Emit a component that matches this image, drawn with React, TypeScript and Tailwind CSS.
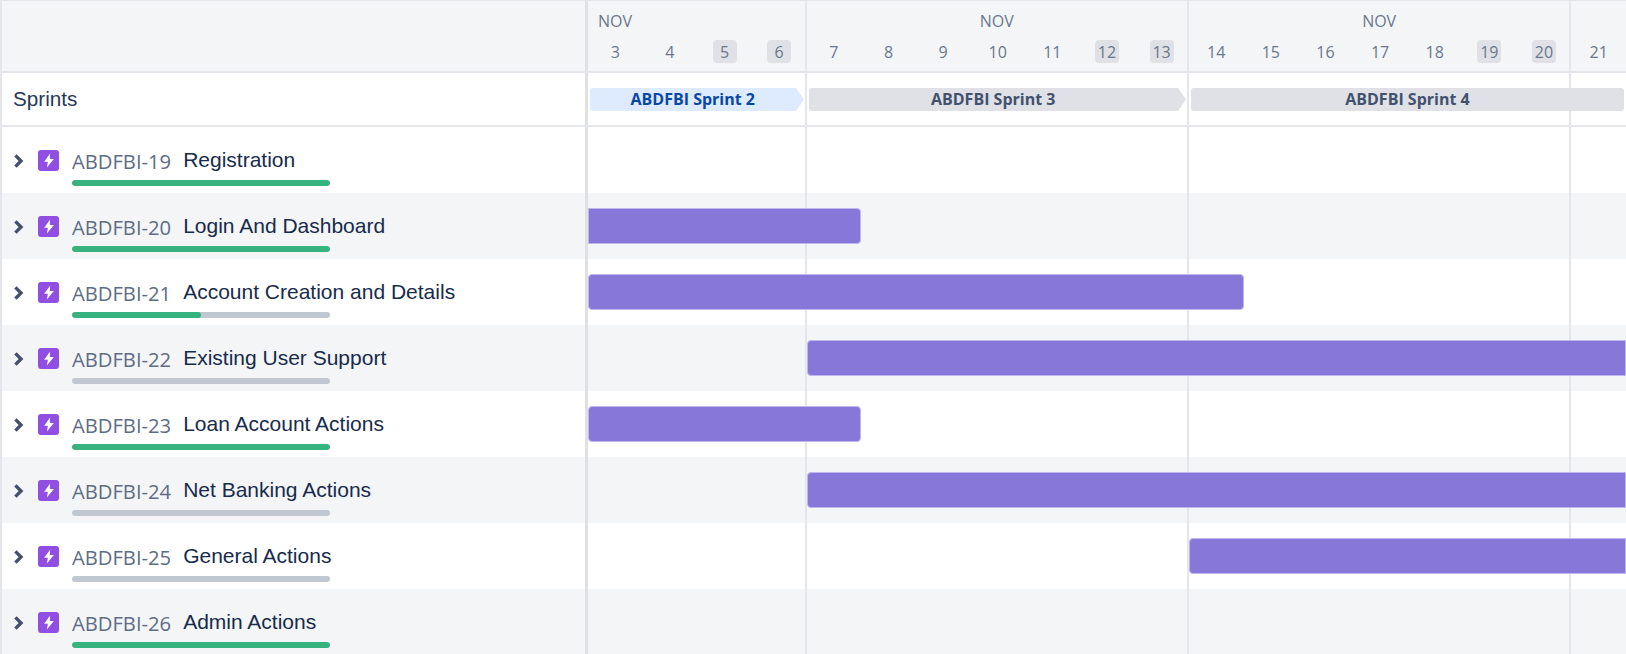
import React from "react";

interface Epic {
  id: string;
  title: string;
  progress: number;
  barClass: string;
}

const epics: Epic[] = [
  { id: "ABDFBI-19", title: "Registration", progress: 100, barClass: "" },
  { id: "ABDFBI-20", title: "Login And Dashboard", progress: 100, barClass: "col-start-1 col-span-5 rounded-l-none" },
  { id: "ABDFBI-21", title: "Account Creation and Details", progress: 50, barClass: "col-start-1 col-span-12" },
  { id: "ABDFBI-22", title: "Existing User Support", progress: 0, barClass: "col-start-5 col-span-15 rounded-r-none" },
  { id: "ABDFBI-23", title: "Loan Account Actions", progress: 100, barClass: "col-start-1 col-span-5" },
  { id: "ABDFBI-24", title: "Net Banking Actions", progress: 0, barClass: "col-start-5 col-span-15 rounded-r-none" },
  { id: "ABDFBI-25", title: "General Actions", progress: 0, barClass: "col-start-12 col-span-8 rounded-r-none" },
  { id: "ABDFBI-26", title: "Admin Actions", progress: 100, barClass: "" },
];

const months = [
  { days: [3, 4, 5, 6], span: "col-span-4", label: "justify-start pl-[10px]" },
  { days: [7, 8, 9, 10, 11, 12, 13], span: "col-span-7", label: "justify-center" },
  { days: [14, 15, 16, 17, 18, 19, 20], span: "col-span-7", label: "justify-center" },
  { days: [21], span: "col-span-1", label: "" },
];

const weekend = [5, 6, 12, 13, 19, 20];

const EpicIcon = () => (
  <div className="w-[21px] h-[21px] rounded-[3px] bg-[#904EE2] flex items-center justify-center shrink-0">
    <svg width="12" height="15" viewBox="0 0 10 13">
      <path d="M6 0.500 0.800 7.500h3.200L3.200 12.500 9.200 5.200H5.700z" fill="#fff" />
    </svg>
  </div>
);

const Chevron = () => (
  <svg width="12" height="16" viewBox="0 0 12 16" className="shrink-0">
    <path d="M2.400 2.400 8 8l-5.600 5.600" fill="none" stroke="#42526E" strokeWidth="3.400" />
  </svg>
);

// vertical month lines behind the bars
const MonthLines = () => (
  <div className="absolute inset-0 grid grid-cols-19">
    <div className="col-span-4 border-r-2 border-[#E4E6EB]" />
    <div className="col-span-7 border-r-2 border-[#E4E6EB]" />
    <div className="col-span-7 border-r-2 border-[#E4E6EB]" />
  </div>
);

const Arrow = ({ color }: { color: string }) => (
  <svg width="8" height="23" viewBox="0 0 8 23" className="shrink-0">
    <path d="M0 0 8 11.500 0 23z" fill={color} />
  </svg>
);

export default function App() {
  return (
    <div className="w-[1626px] h-[654px] overflow-hidden bg-white border-t border-l-2 border-[#E4E6EB] font-['Open_Sans',sans-serif]">
      {/* header */}
      <div className="flex h-[72px] bg-[#F4F5F7] border-b-2 border-[#E4E6EB]">
        <div className="w-[586px] shrink-0 border-r-[3px] border-[#DFE1E6]" />
        <div className="flex-1 grid grid-cols-19">
          {months.map((m, i) => (
            <div key={i} className={`${m.span} flex flex-col ${i < 3 ? "border-r-2 border-[#E4E6EB]" : ""}`}>
              <div className={`h-[39px] pt-px flex items-center text-[16px] text-[#6B778C] ${m.label}`}>
                {m.days.length > 1 ? "NOV" : ""}
              </div>
              <div className={`flex-1 flex ${i < 3 ? "-mr-[2px]" : ""}`}>
                {m.days.map((d) => (
                  <div key={d} className="flex-1 flex justify-center">
                    <span
                      className={`w-6 h-[23px] flex items-center justify-center rounded text-[16px] text-[#6B778C] ${
                        weekend.includes(d) ? "bg-[#DFE1E6]" : ""
                      }`}
                    >
                      {d}
                    </span>
                  </div>
                ))}
              </div>
            </div>
          ))}
        </div>
      </div>

      {/* sprints */}
      <div className="flex h-[54px] border-b-2 border-[#E4E6EB]">
        <div className="w-[586px] shrink-0 border-r-[3px] border-[#DFE1E6] flex items-center pl-[11px] text-[20.700px] text-[#253858] font-['Liberation_Sans',sans-serif]">
          Sprints
        </div>
        <div className="flex-1 relative">
          <MonthLines />
          <div className="relative h-full grid grid-cols-19 items-center text-[16px] font-bold">
            <div className="col-span-4 flex pl-[2px] pr-[3px]">
              <div className="flex-1 h-[23px] bg-[#DEEBFF] rounded-l-[3px] flex items-center justify-center text-[#0747A6]">
                ABDFBI Sprint 2
              </div>
              <Arrow color="#DEEBFF" />
            </div>
            <div className="col-span-7 flex pl-[2px] pr-[3px]">
              <div className="flex-1 h-[23px] bg-[#DFE1E6] rounded-l-[3px] flex items-center justify-center text-[#42526E]">
                ABDFBI Sprint 3
              </div>
              <Arrow color="#DFE1E6" />
            </div>
            <div className="col-span-8 flex pl-[2px] pr-[2px]">
              <div className="flex-1 h-[23px] bg-[#DFE1E6] rounded-[3px] flex items-center justify-center text-[#42526E]">
                ABDFBI Sprint 4
              </div>
            </div>
          </div>
        </div>
      </div>

      {/* epics */}
      {epics.map((e, i) => (
        <div key={e.id} className={`flex h-[66px] ${i % 2 === 1 ? "bg-[#F4F5F7]" : "bg-white"}`}>
          <div className="w-[586px] shrink-0 border-r-[3px] border-[#DFE1E6] flex items-start pl-[11px] pt-[23px]">
            <div className="h-[21px] flex items-center mr-[13px]">
              <Chevron />
            </div>
            <EpicIcon />
            <div className="ml-[13px] w-[258px]">
              <div className="h-[34px] flex items-start whitespace-nowrap -mt-[4px]">
                <span className="text-[20.200px] leading-[30px] text-[#5E6C84]">{e.id}</span>
                <span className="ml-3 text-[21px] leading-[28px] text-[#172B4D] font-['Liberation_Sans',sans-serif]">
                  {e.title}
                </span>
              </div>
              <div className="h-[6px] rounded-full bg-[#C1C7D0] overflow-hidden">
                <div className="h-full rounded-full bg-[#36B37E]" style={{ width: `${e.progress}%` }} />
              </div>
            </div>
          </div>
          <div className="flex-1 relative">
            <MonthLines />
            <div className="relative h-full grid grid-cols-19 items-center">
              {e.barClass && (
                <div className={`h-[36px] rounded bg-[#8777D9] border border-[#C0B6F2] ${e.barClass}`} />
              )}
            </div>
          </div>
        </div>
      ))}
    </div>
  );
}
